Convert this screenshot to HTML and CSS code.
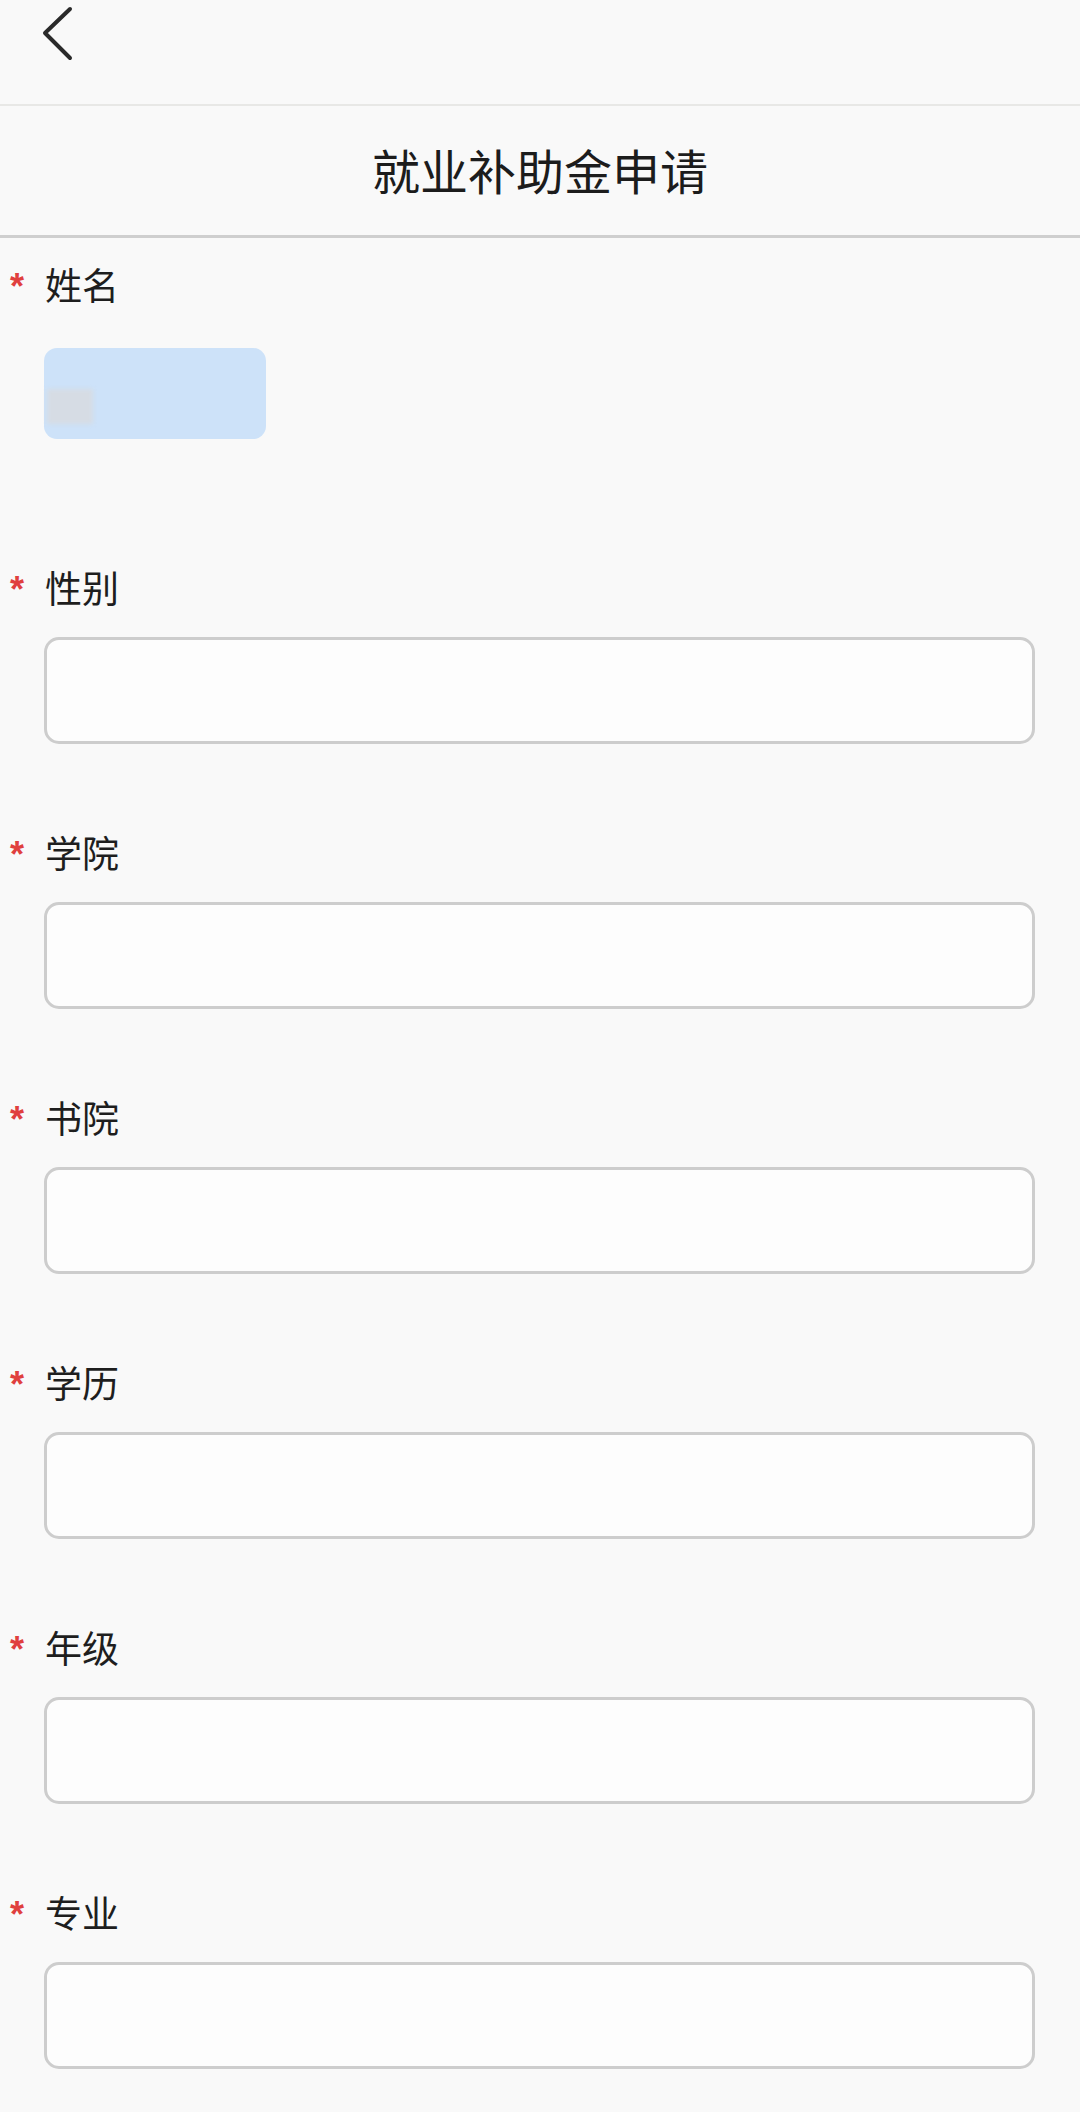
FILE: index.html
```html
<!DOCTYPE html>
<html lang="zh-CN">
  <head>
    <meta charset="UTF-8" />
    <meta name="viewport" content="width=device-width, initial-scale=1.0" />
    <title>就业补助金申请</title>
    <link rel="stylesheet" href="styles.css">
  </head>
  <body>
    <div class="top-bar">
      <svg class="back" width="34" height="56" viewBox="0 0 34 56">
        <polyline points="28,3 3,27 28,52" fill="none" stroke="#2a2a2a" stroke-width="4" stroke-linecap="round" stroke-linejoin="round" />
      </svg>
    </div>
    <div class="title-bar">
      <h1 class="title">就业补助金申请</h1>
    </div>

    <div class="form">
      <div class="field first">
        <p class="label"><span class="star">*</span>姓名</p>
        <div class="name-box">
          <div class="blur"></div>
        </div>
      </div>

      <div class="field">
        <p class="label"><span class="star">*</span>性别</p>
        <div class="input"></div>
      </div>

      <div class="field">
        <p class="label"><span class="star">*</span>学院</p>
        <div class="input"></div>
      </div>

      <div class="field">
        <p class="label"><span class="star">*</span>书院</p>
        <div class="input"></div>
      </div>

      <div class="field">
        <p class="label"><span class="star">*</span>学历</p>
        <div class="input"></div>
      </div>

      <div class="field">
        <p class="label"><span class="star">*</span>年级</p>
        <div class="input"></div>
      </div>

      <div class="field">
        <p class="label"><span class="star">*</span>专业</p>
        <div class="input"></div>
      </div>
    </div>
  </body>
</html>
```

FILE: styles.css
```css
body {
  margin: 0;
  font-family: "Noto Sans CJK SC", "Noto Sans", sans-serif;
  background-color: #f9f9f9;
  color: #1e1e1e;
}

.top-bar {
  height: 106px;
  display: flex;
  align-items: flex-start;
  padding-left: 42px;
  padding-top: 6px;
  box-sizing: border-box;
  border-bottom: 2px solid #e8e8e6;
}

.back {
  display: block;
}

.title-bar {
  height: 129px;
  display: flex;
  justify-content: center;
  align-items: center;
  border-bottom: 3px solid #cfcfcf;
}

.title {
  margin: 0;
  font-size: 48px;
  font-weight: 400;
  line-height: 1;
  color: #1c1c1c;
  padding-bottom: 4px;
}

.form {
  padding: 21px 45px 0 44px;
}

.field {
  margin-bottom: 83px;
}

.field.first {
  margin-bottom: 123px;
}

.label {
  margin: 0 0 0 -34px;
  font-size: 37px;
  line-height: 50px;
  height: 50px;
  display: flex;
  align-items: center;
}

.star {
  display: inline-block;
  width: 35px;
  font-family: "Liberation Sans", sans-serif;
  font-size: 36px;
  font-weight: bold;
  color: #e0403e;
  line-height: 1;
  padding-top: 6px;
}

.name-box {
  margin-top: 39px;
  width: 222px;
  height: 91px;
  border-radius: 13px;
  background-color: #cde2f9;
  display: flex;
  align-items: flex-end;
  padding-bottom: 15px;
  box-sizing: border-box;
}

.blur {
  width: 46px;
  height: 35px;
  margin-left: 3px;
  background-color: #d6dce4;
  filter: blur(2px);
}

.input {
  margin-top: 25px;
  height: 107px;
  box-sizing: border-box;
  border: 3px solid #cdcdcd;
  border-radius: 15px;
  background-color: #fdfdfd;
}
```
